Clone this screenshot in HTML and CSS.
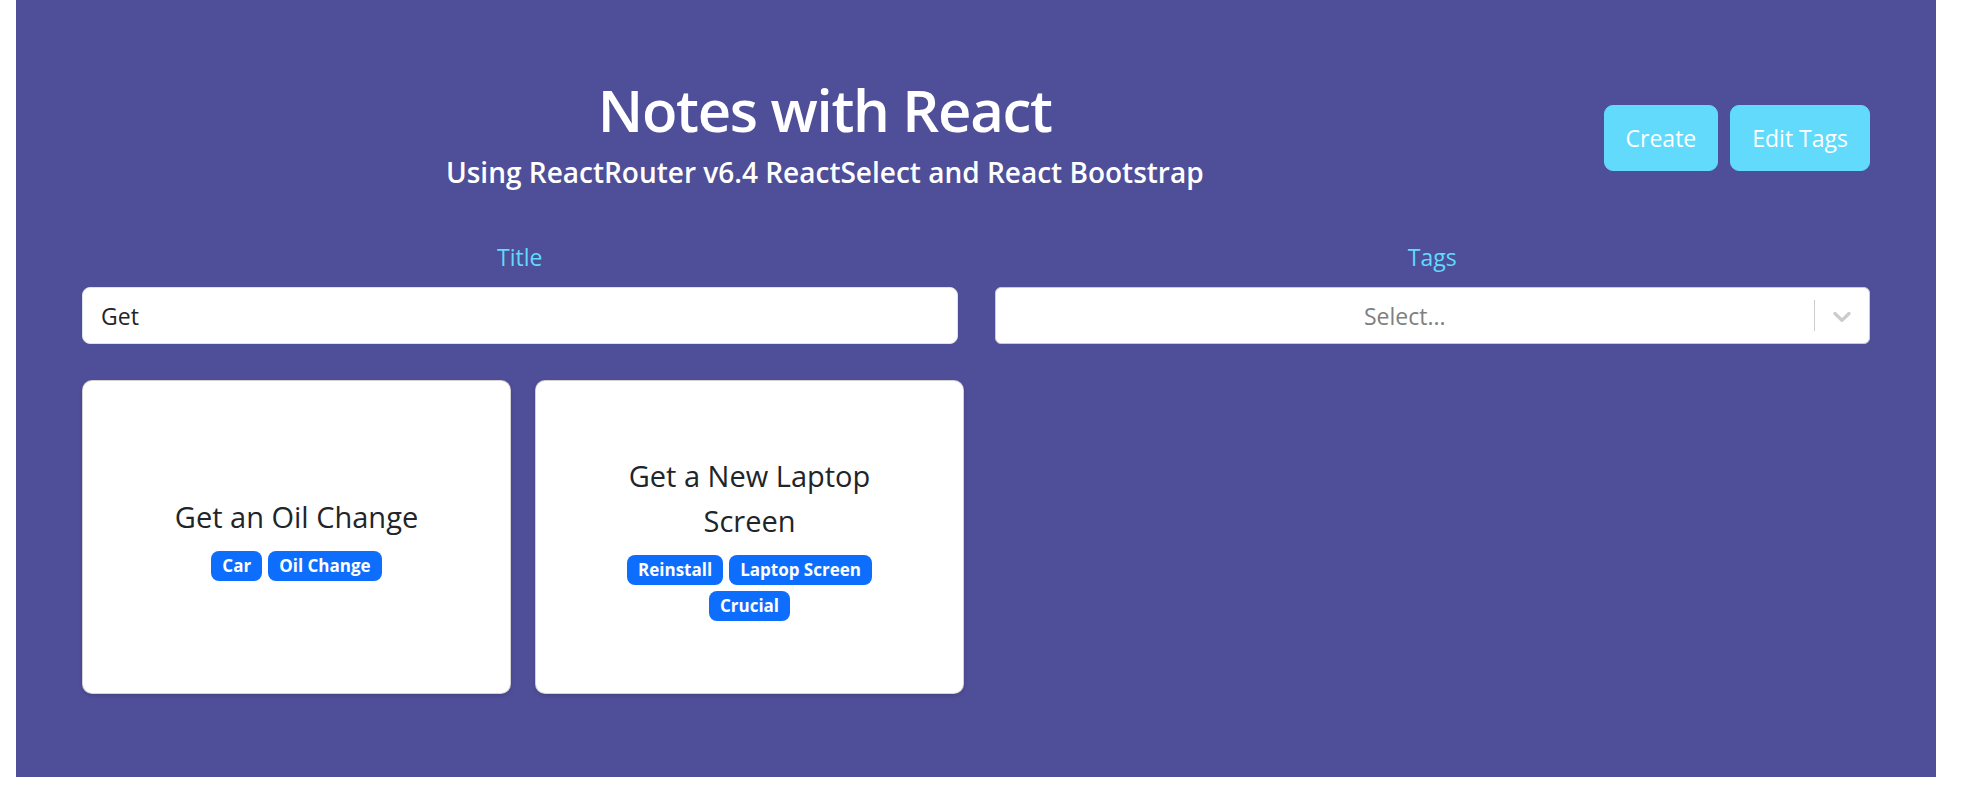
FILE: index.html
```html
<!DOCTYPE html>
<html lang="en">
<head>
<meta charset="utf-8">
<title>Notes with React</title>
<link rel="stylesheet" href="styles.css">
</head>
<body>
<div class="app">
  <header class="header">
    <div class="heading">
      <h1 class="title">Notes with React</h1>
      <h5 class="subtitle">Using ReactRouter v6.4 ReactSelect and React Bootstrap</h5>
    </div>
    <div class="actions">
      <button class="btn" type="button">Create</button>
      <button class="btn" type="button">Edit Tags</button>
    </div>
  </header>

  <form class="filters">
    <div class="field">
      <label class="label" for="title">Title</label>
      <input class="input" id="title" type="text" value="Get">
    </div>
    <div class="field">
      <label class="label">Tags</label>
      <div class="select">
        <div class="select-value"><span class="placeholder">Select...</span></div>
        <div class="select-indicators">
          <span class="select-sep"></span>
          <span class="select-chev">
            <svg viewBox="0 0 20 20" width="30" height="30" aria-hidden="true"><path d="M4.516 7.548c0.436-0.446 1.043-0.481 1.576 0l3.908 3.747 3.908-3.747c0.533-0.481 1.141-0.446 1.574 0 0.436 0.445 0.408 1.197 0 1.615-0.406 0.418-4.695 4.502-4.695 4.502-0.217 0.223-0.502 0.335-0.787 0.335s-0.57-0.112-0.789-0.335c0 0-4.287-4.084-4.695-4.502s-0.436-1.17 0-1.615z"></path></svg>
          </span>
        </div>
      </div>
    </div>
  </form>

  <div class="cards">
    <div class="card">
      <div class="card-stack">
        <span class="card-title">Get an Oil Change</span>
        <div class="badges">
          <span class="badge">Car</span>
          <span class="badge">Oil Change</span>
        </div>
      </div>
    </div>
    <div class="card">
      <div class="card-stack">
        <span class="card-title">Get a New Laptop Screen</span>
        <div class="badges">
          <span class="badge">Reinstall</span>
          <span class="badge">Laptop Screen</span>
          <span class="badge">Crucial</span>
        </div>
      </div>
    </div>
  </div>
</div>
</body>
</html>
```
FILE: styles.css
```css
* { box-sizing: border-box; }

body {
  margin: 0;
  background: #ffffff;
  font-family: "Open Sans", "Noto Sans", "DejaVu Sans", sans-serif;
  color: #212529;
}

.app {
  background: #4f4e98;
  margin: 0 36px 0 16px;
  padding: 74px 66px 83px;
}

.header {
  display: flex;
  align-items: center;
  gap: 36px;
  margin-bottom: 38px;
}

.heading {
  flex: 1;
  text-align: center;
  color: #ffffff;
}

.title {
  margin: 0 0 9px;
  font-size: 58px;
  font-weight: 600;
  line-height: 72px;
  letter-spacing: -1.3px;
}

.subtitle {
  margin: 0 0 12px;
  font-size: 28px;
  font-weight: 600;
  line-height: 34px;
}

.actions {
  display: flex;
  gap: 12px;
}

.btn {
  font-family: inherit;
  font-size: 23px;
  line-height: 36px;
  padding: 14px 21px;
  border: 1px solid #61dafb;
  border-radius: 9px;
  background: #61dafb;
  color: #ffffff;
}

.filters {
  display: grid;
  grid-template-columns: 1fr 1fr;
  gap: 37px;
  margin: 0 0 36px;
}

.label {
  display: block;
  text-align: center;
  color: #61dafb;
  font-size: 23px;
  line-height: 36px;
  margin-bottom: 12px;
}

.input {
  display: block;
  width: 100%;
  height: 57px;
  padding: 9px 18px;
  font-family: inherit;
  font-size: 23px;
  color: #212529;
  background: #ffffff;
  border: 1px solid #dee2e6;
  border-radius: 8px;
  outline: none;
}

.select {
  display: flex;
  align-items: center;
  height: 57px;
  background: #ffffff;
  border: 1px solid #cccccc;
  border-radius: 6px;
}

.select-value {
  flex: 1;
  text-align: center;
  padding: 3px 12px;
}

.placeholder {
  color: #808080;
  font-size: 23px;
}

.select-indicators {
  display: flex;
  align-items: center;
  align-self: stretch;
}

.select-sep {
  align-self: stretch;
  width: 1px;
  margin: 12px 0;
  background: #cccccc;
}

.select-chev {
  display: flex;
  padding: 12px;
  color: #cccccc;
}

.select-chev svg {
  fill: currentColor;
}

.cards {
  display: grid;
  grid-template-columns: repeat(4, 1fr);
  gap: 24px;
}

.card {
  height: 314px;
  display: flex;
  align-items: center;
  justify-content: center;
  background: #ffffff;
  border: 1px solid rgba(0, 0, 0, 0.175);
  border-radius: 10px;
  box-shadow: 0 2px 4px rgba(0, 0, 0, 0.12);
}

.card-stack {
  display: flex;
  flex-direction: column;
  align-items: center;
  gap: 12px;
  max-width: 300px;
}

.card-title {
  font-size: 29px;
  line-height: 45px;
  text-align: center;
}

.badges {
  display: flex;
  flex-wrap: wrap;
  justify-content: center;
  gap: 6px;
}

.badge {
  display: inline-block;
  font-size: 17px;
  font-weight: 700;
  line-height: 18px;
  padding: 6px 11px;
  border-radius: 8px;
  background: #0d6efd;
  color: #ffffff;
}
```
